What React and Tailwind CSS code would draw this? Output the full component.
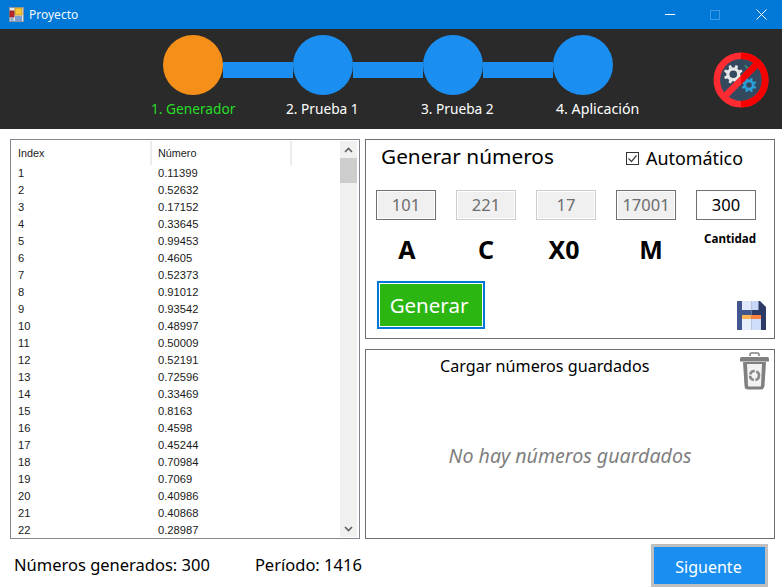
import React from "react";

const rows = ["0.11399","0.52632","0.17152","0.33645","0.99453","0.4605","0.52373","0.91012","0.93542","0.48997","0.50009","0.52191","0.72596","0.33469","0.8163","0.4598","0.45244","0.70984","0.7069","0.40986","0.40868","0.28987"];

const gearPath = (cx, cy, ro, ri, teeth) => {
  let d = "";
  const step = (Math.PI * 2) / teeth;
  for (let i = 0; i < teeth; i++) {
    const a = i * step + step / 2;
    const pts = [[a - step * 0.3, ri], [a - step * 0.17, ro], [a + step * 0.17, ro], [a + step * 0.3, ri]];
    pts.forEach(([t, r], j) => {
      d += `${i === 0 && j === 0 ? "M" : "L"}${(cx + r * Math.cos(t)).toFixed(2)} ${(cy + r * Math.sin(t)).toFixed(2)}`;
    });
  }
  return d + "Z";
};

function NoGears() {
  return (
    <svg width="56" height="56" viewBox="0 0 56 56">
      <defs>
        <clipPath id="rightHalf"><rect x="28" y="0" width="28" height="56" /></clipPath>
      </defs>
      <circle cx="28" cy="28" r="23" fill="#34495e" />
      <path d={gearPath(20.3, 22.3, 9.5, 7, 8)} fill="#e6e6e6" />
      <circle cx="20.3" cy="22.3" r="3.8" fill="#34495e" />
      <path d={gearPath(36, 33, 7.5, 5.5, 8)} fill="#2a9fd8" />
      <circle cx="36" cy="33" r="2.8" fill="#34495e" />
      <path d="M32 13l1 2M35 15l-2 1" stroke="#3aa98a" strokeWidth="1.2" />
      <circle cx="28" cy="28" r="24.2" fill="none" stroke="#ff2b33" strokeWidth="6.600" />
      <path d="M12 44L44 12" stroke="#ff2b33" strokeWidth="6.500" />
      <g clipPath="url(#rightHalf)">
        <circle cx="28" cy="28" r="24.2" fill="none" stroke="#f60000" strokeWidth="6.600" />
        <path d="M12 44L44 12" stroke="#f60000" strokeWidth="6.500" />
      </g>
    </svg>
  );
}

function Floppy() {
  return (
    <svg width="29" height="29" viewBox="0 0 29 29">
      <path d="M0 0H14.500V29H0Z" fill="#41568f" />
      <path d="M14.500 0H23L29 6V29H14.500Z" fill="#2b3b66" />
      <rect x="5" y="0" width="9.500" height="9" fill="#dfe9fb" />
      <rect x="14.500" y="0" width="7" height="9" fill="#c7d8f6" />
      <rect x="5" y="14" width="9.500" height="4" fill="#ffb454" />
      <rect x="14.500" y="14" width="9.500" height="4" fill="#ff8244" />
      <rect x="5" y="18" width="9.500" height="11" fill="#e6eefc" />
      <rect x="14.500" y="18" width="9.500" height="11" fill="#cfdef8" />
    </svg>
  );
}

function Trash() {
  return (
    <svg width="29" height="38" viewBox="0 0 29 38">
      <path d="M10 4V2.500Q10 1 11.500 1H17.500Q19 1 19 2.500V4" fill="none" stroke="#808080" strokeWidth="1.600" />
      <path d="M1.500 5H27.500Q29 5 29 6.500V9.500H0V6.500Q0 5 1.500 5Z" fill="#808080" />
      <path d="M3 10H26L24.500 34Q24.300 37.500 21 37.500H8Q4.700 37.500 4.500 34Z" fill="#808080" />
      <path d="M7 12H22L21 33.500Q21 34.500 20 34.500H9Q8 34.500 8 33.500Z" fill="#f2f2f2" />
      <circle cx="14.500" cy="23.500" r="4.500" fill="none" stroke="#8a8a8a" strokeWidth="2.600" strokeDasharray="6 1.500" />
    </svg>
  );
}

function WinIcon() {
  return (
    <svg width="15" height="15" viewBox="0 0 15 15">
      <rect x="0.500" y="0.500" width="14" height="14" fill="#dfe7ef" stroke="#8a98a6" />
      <rect x="6" y="1" width="7" height="7" fill="#f5c63a" stroke="#c08a1a" strokeWidth="0.800" />
      <rect x="1" y="4" width="4" height="6" fill="#c8282a" stroke="#7a1a1a" strokeWidth="0.800" />
      <rect x="1.500" y="11" width="3" height="3" fill="#8fa8c8" />
      <rect x="6" y="9" width="7" height="5" fill="#7f9fd0" />
    </svg>
  );
}

function Field({ value, dark, active }) {
  return (
    <div className={`w-[60px] h-[30px] border ${dark ? "border-[#707070]" : "border-[#cccccc]"} ${active ? "bg-white text-black" : "bg-[#f0f0f0] text-[#6d6d6d] outline outline-1 -outline-offset-2 outline-white"} flex items-center justify-center text-[16.500px]`}>
      {value}
    </div>
  );
}

export default function App() {
  return (
    <div className="w-[782px] h-[588px] bg-white flex flex-col overflow-hidden font-['Noto_Sans','Open_Sans',sans-serif] text-black">
      <div className="h-[29px] bg-[#0078d7] flex items-center text-white shrink-0">
        <div className="ml-[9px] flex"><WinIcon /></div>
        <div className="ml-[5px] text-[12px] text-[#f2f8fd]">Proyecto</div>
        <div className="ml-auto -mr-[2px] flex items-center h-full">
          <div className="w-[45px] flex justify-center"><div className="w-[10px] h-px bg-white" /></div>
          <div className="w-[46px] flex justify-center"><div className="w-[10px] h-[10px] border border-[#3c9ae6]" /></div>
          <div className="w-[46px] flex justify-center">
            <svg width="11" height="11" viewBox="0 0 11 11"><path d="M.5.5l10 10M10.500.5l-10 10" stroke="#fff" strokeWidth="1" /></svg>
          </div>
        </div>
      </div>

      <div className="h-[100px] bg-[#2a2a2a] shrink-0 flex flex-col">
        <div className="flex items-start pl-[163px] pt-[6px]">
          <div className="w-[60px] h-[60px] rounded-full bg-[#f49019] shrink-0" />
          <div className="w-[70px] h-[16px] bg-[#1b8ff1] mt-[27px]" />
          <div className="w-[60px] h-[60px] rounded-full bg-[#1b8ff1] shrink-0" />
          <div className="w-[70px] h-[16px] bg-[#1b8ff1] mt-[27px]" />
          <div className="w-[60px] h-[60px] rounded-full bg-[#1b8ff1] shrink-0" />
          <div className="w-[70px] h-[16px] bg-[#1b8ff1] mt-[27px]" />
          <div className="w-[60px] h-[60px] rounded-full bg-[#1b8ff1] shrink-0" />
          <div className="ml-[100px] mt-[17px] flex"><NoGears /></div>
        </div>
        <div className="flex text-[13.700px] leading-[18px] text-white -mt-[8px] pl-[151px] whitespace-nowrap">
          <span className="text-[#27df27] w-[135px]">1. Generador</span>
          <span className="w-[135px]">2. Prueba 1</span>
          <span className="w-[135px]">3. Prueba 2</span>
          <span className="text-[14.200px]">4. Aplicación</span>
        </div>
      </div>

      <div className="flex gap-[5px] pl-[10px] pt-[10px] shrink-0">
        <div className="w-[350px] h-[400px] border border-[#828790] bg-white p-px flex font-['Liberation_Sans',sans-serif] text-[11.200px] text-[#1a1a1a]">
          <div className="flex-1 overflow-hidden">
            <div className="flex h-[24px] items-center text-[10.800px]">
              <div className="w-[140px] pl-[6px] h-full flex items-center border-r-2 border-[#ececec]">Index</div>
              <div className="w-[140px] pl-[6px] h-full flex items-center border-r-2 border-[#ececec]">Número</div>
            </div>
            {rows.map((v, i) => (
              <div key={i} className="flex h-[17px] items-center">
                <div className="w-[140px] pl-[6px]">{i + 1}</div>
                <div className="w-[140px] pl-[6px]">{v}</div>
              </div>
            ))}
          </div>
          <div className="w-[17px] bg-[#f0f0f0] flex flex-col items-center mr-px">
            <div className="h-[17px] flex items-center justify-center">
              <svg width="9" height="6" viewBox="0 0 9 6"><path d="M1 5l3.500-3.500L8 5" fill="none" stroke="#606060" strokeWidth="1.600" /></svg>
            </div>
            <div className="h-[25px] w-full bg-[#cdcdcd]" />
            <div className="mt-auto h-[17px] flex items-center justify-center">
              <svg width="9" height="6" viewBox="0 0 9 6"><path d="M1 1l3.500 3.500L8 1" fill="none" stroke="#606060" strokeWidth="1.600" /></svg>
            </div>
          </div>
        </div>

        <div className="w-[410px] flex flex-col gap-[10px]">
          <div className="h-[200px] border border-[#6e6e6e] flex flex-col">
            <div className="flex items-center pl-[15px] h-[36px]">
              <span className="text-[20.800px] leading-none w-[245px] whitespace-nowrap -mt-[3px]">Generar números</span>
              <svg width="13" height="13" viewBox="0 0 13 13"><rect x=".5" y=".5" width="12" height="12" fill="#fff" stroke="#333" /><path d="M2.500 6.500l3 3 5-6" fill="none" stroke="#444" strokeWidth="1.200" /></svg>
              <span className="ml-[7px] text-[17.900px] leading-none mt-[1px]">Automático</span>
            </div>
            <div className="flex gap-[20px] pl-[10px] mt-[14px]">
              <Field value="101" dark />
              <Field value="221" />
              <Field value="17" />
              <Field value="17001" dark />
              <Field value="300" dark active />
            </div>
            <div className="flex pl-[10px] mt-[11px] font-bold text-[25px] leading-[36px]">
              <span className="w-[60px] text-center ml-[1px]">A</span>
              <span className="w-[60px] text-center ml-[19px]">C</span>
              <span className="w-[60px] text-center ml-[18px]">X0</span>
              <span className="w-[60px] text-center ml-[27px]">M</span>
              <span className="text-[11.600px] leading-[16px] ml-[23px]">Cantidad</span>
            </div>
            <div className="flex pl-[11px] mt-[14px] items-start">
              <div className="w-[108px] h-[48px] border-2 border-[#0078d7] bg-[#2cb612] outline outline-1 -outline-offset-3 outline-white text-white text-[20.500px] flex items-center justify-center pr-[4px]">Generar</div>
              <div className="ml-[252px] mt-[20px] flex"><Floppy /></div>
            </div>
          </div>
          <div className="h-[190px] border border-[#6e6e6e] flex flex-col">
            <div className="flex pl-[74px] pr-[5px]">
              <span className="text-[16.150px] mt-[4px] leading-[24px]">Cargar números guardados</span>
              <div className="ml-auto mt-[2px] flex"><Trash /></div>
            </div>
            <div className="text-center italic text-[#808080] text-[19.600px] mt-[53px] leading-[26px]">No hay números guardados</div>
          </div>
        </div>
      </div>

      <div className="flex items-center pl-[14px] text-[16.500px] mt-[5px]">
        <span>Números generados: 300</span>
        <span className="ml-[45px]">Período: 1416</span>
        <div className="ml-auto mr-[14px] w-[117px] h-[43px] border-[3px] border-[#bfbfbf] bg-[#1b8ff1] text-white text-[16px] flex items-center justify-center pt-[2px] pr-[2px]">Siguente</div>
      </div>
    </div>
  );
}
